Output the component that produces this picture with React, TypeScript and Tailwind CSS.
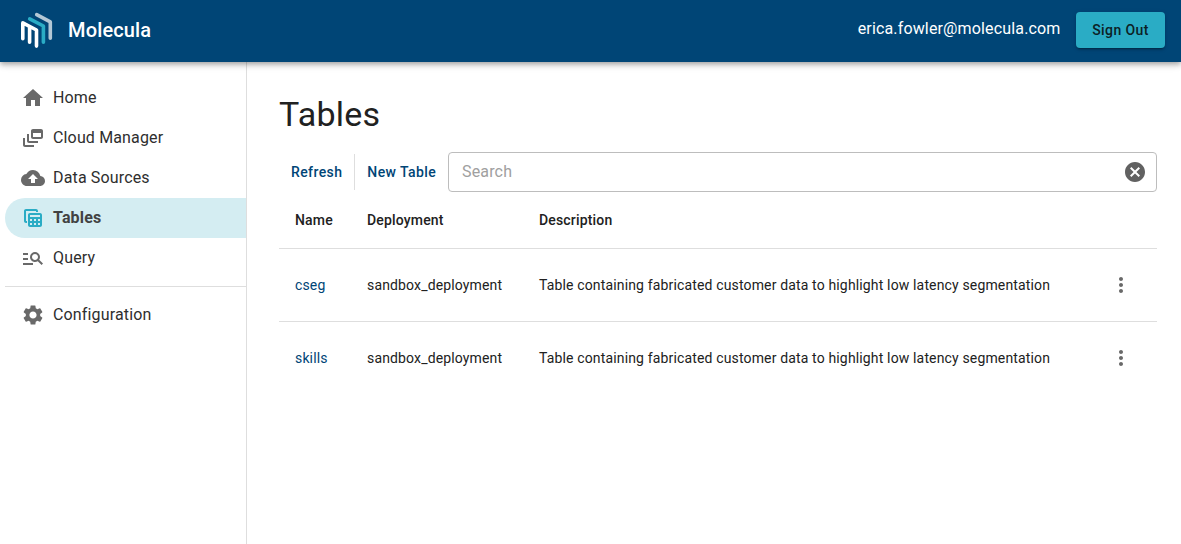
import React from 'react';
import { MdHome, MdOutlineDynamicFeed, MdBackup, MdOutlineTableView, MdManageSearch, MdSettings, MdCancel, MdMoreVert } from 'react-icons/md';

function Logo() {
  return (
    <svg width="36" height="40" viewBox="0 0 36 40" fill="none" strokeWidth="3.600" strokeLinecap="round" strokeLinejoin="round">
      <path d="M18.700 4.700 32.300 11.900V28.300" stroke="#b3c8d6" />
      <path d="M11.700 8.800 25.400 16V32.300" stroke="#2aacc5" />
      <path d="M4.800 28.800V12.900L18.500 20V36.100M11.600 16.500V32.300" stroke="#fff" />
    </svg>
  );
}

type NavItem = { label: string; icon: React.ReactNode; active?: boolean };

const nav: NavItem[] = [
  { label: 'Home', icon: <MdHome size={24} /> },
  { label: 'Cloud Manager', icon: <MdOutlineDynamicFeed size={24} /> },
  { label: 'Data Sources', icon: <MdBackup size={24} /> },
  { label: 'Tables', icon: <MdOutlineTableView size={24} />, active: true },
  { label: 'Query', icon: <MdManageSearch size={24} /> },
];

function NavLink({ label, icon, active }: NavItem) {
  return (
    <a
      className={
        active
          ? 'flex h-10 items-center rounded-l-full bg-[#d4edf2] pl-4 font-bold tracking-[0.15px] text-[#424242]'
          : 'flex h-10 items-center pl-4 tracking-[0.15px] text-[#2e2e2e]'
      }
    >
      <span className={active ? 'mr-2 text-[#2aacc5]' : 'mr-2 text-[#696969]'}>{icon}</span>
      {label}
    </a>
  );
}

const rows = [
  { name: 'cseg', deployment: 'sandbox_deployment' },
  { name: 'skills', deployment: 'sandbox_deployment' },
];

export default function App() {
  return (
    <div className="flex h-[544px] flex-col overflow-hidden bg-white font-['Roboto',sans-serif] text-base text-[#212121]">
      <header className="relative z-10 flex h-[62px] shrink-0 items-center bg-[#004576] pr-4 pb-0.5 pl-[18px] text-white shadow-[0_2px_4px_-1px_rgba(0,0,0,0.2),0_4px_5px_0_rgba(0,0,0,0.14),0_1px_10px_0_rgba(0,0,0,0.12)]">
        <Logo />
        <span className="ml-3.5 text-xl font-medium tracking-[0.15px]">Molecula</span>
        <span className="mr-[15.5px] ml-auto pb-0.5 tracking-[0.15px]">erica.fowler@molecula.com</span>
        <button className="h-9 w-[89px] rounded bg-[#2aacc5] text-sm font-medium tracking-[0.4px] text-[#0c2125] shadow-[0_3px_1px_-2px_rgba(0,0,0,0.2),0_2px_2px_0_rgba(0,0,0,0.14),0_1px_5px_0_rgba(0,0,0,0.12)]">
          Sign Out
        </button>
      </header>
      <div className="flex min-h-0 flex-1">
        <aside className="w-[247px] shrink-0 border-r border-[#dedede] pt-4 pl-[5px]">
          <nav>
            {nav.map((item) => (
              <NavLink key={item.label} {...item} />
            ))}
            <hr className="mt-2 mb-2 border-[#dedede]" />
            <NavLink label="Configuration" icon={<MdSettings size={24} />} />
          </nav>
        </aside>
        <main className="flex-1 pt-8 pr-6 pl-8">
          <h1 className="h-[42px] text-[34px] leading-[40px] tracking-[0.25px]">Tables</h1>
          <div className="mt-4 flex h-10 items-center text-sm font-medium tracking-[0.4px] text-[#004576]">
            <button className="px-3">Refresh</button>
            <span className="h-9 w-px bg-[#dedede]" />
            <button className="px-3">New Table</button>
            <div className="flex h-10 flex-1 items-center justify-between rounded border border-[#bdbdbd] pr-[9px] pl-[13px]">
              <input
                className="flex-1 text-base font-normal tracking-[0.15px] text-[#212121] outline-none placeholder:text-[#a0a0a0]"
                placeholder="Search"
              />
              <MdCancel size={24} className="text-[#616161]" />
            </div>
          </div>
          <table className="w-full table-fixed border-collapse text-left text-sm">
            <colgroup>
              <col className="w-[72px]" />
              <col className="w-[172px]" />
              <col />
              <col className="w-[72px]" />
            </colgroup>
            <thead>
              <tr className="h-14 border-b border-[#dedede] text-sm tracking-[0.17px]">
                <th className="pl-4 font-medium">Name</th>
                <th className="pl-4 font-medium">Deployment</th>
                <th className="pl-4 font-medium">Description</th>
                <th />
              </tr>
            </thead>
            <tbody>
              {rows.map((row, i) => (
                <tr
                  key={row.name}
                  className={i < rows.length - 1 ? 'h-[73px] border-b border-[#dedede] tracking-[0.15px]' : 'h-[73px] tracking-[0.15px]'}
                >
                  <td className="pl-4 text-[#004576]">{row.name}</td>
                  <td className="pl-4">{row.deployment}</td>
                  <td className="pl-4">Table containing fabricated customer data to highlight low latency segmentation</td>
                  <td className="pl-6">
                    <MdMoreVert size={24} className="text-[#696969]" />
                  </td>
                </tr>
              ))}
            </tbody>
          </table>
        </main>
      </div>
    </div>
  );
}
